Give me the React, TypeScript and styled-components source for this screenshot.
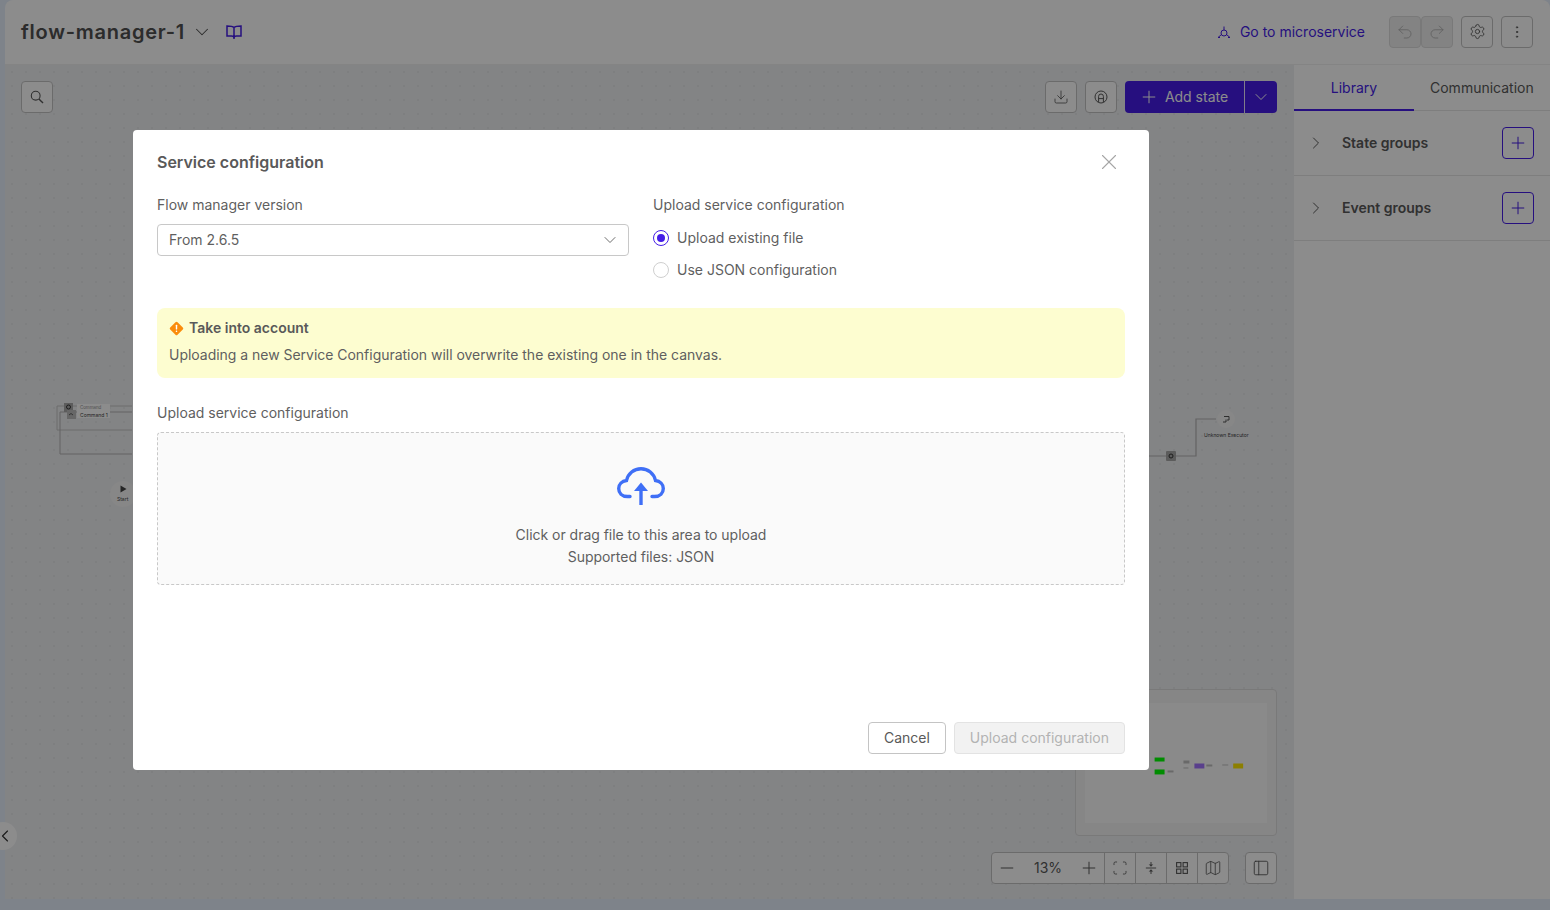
import styled, { createGlobalStyle } from 'styled-components';
import {
  ChevronDown,
  ChevronLeft,
  ChevronRight,
  Download,
  Map as MapIcon,
  Minus,
  MoreVertical,
  PanelLeft,
  Plus,
  Redo2,
  Scan,
  Settings,
  Undo2,
  X,
} from 'lucide-react';

const GlobalStyle = createGlobalStyle`
  html, body {
    margin: 0;
    padding: 0;
    height: 100%;
    overflow: hidden;
  }
  body {
    font-family: Inter, "Liberation Sans", sans-serif;
    font-size: 14px;
    line-height: 22px;
    color: #5f5f5f;
  }
  * {
    box-sizing: border-box;
  }
`;

const Shell = styled.div`
  position: relative;
  height: 910px;
  padding: 0 0 11px 5px;
  background: #e6eefb;
`;

const Main = styled.div`
  height: 100%;
  display: flex;
  flex-direction: column;
  border-radius: 8px 8px 0 0;
  overflow: hidden;
  background: #fff;
`;

const Header = styled.header`
  height: 65px;
  flex: none;
  display: flex;
  align-items: center;
  padding: 0 17px 1px 16px;
  border-bottom: 1px solid #f0f0f0;
`;

const FlowName = styled.h1`
  margin: 0 6px 0 0;
  font-size: 20px;
  line-height: 28px;
  font-weight: 600;
  letter-spacing: 0.75px;
  color: #505050;
`;

const HeaderLeft = styled.div`
  display: flex;
  align-items: center;
  color: #505050;
`;

const BookButton = styled.span`
  display: flex;
  margin-left: 13px;
  color: #451de7;
`;

const HeaderRight = styled.div`
  margin-left: auto;
  display: flex;
  align-items: center;
`;

const MicroLink = styled.a`
  display: flex;
  align-items: center;
  gap: 9px;
  margin-right: 24px;
  color: #451de7;
`;

const IconButton = styled.button<{ $disabled?: boolean; $gap?: number }>`
  width: 32px;
  height: 32px;
  flex: none;
  display: flex;
  align-items: center;
  justify-content: center;
  padding: 0;
  margin-left: ${(p) => p.$gap ?? 0}px;
  border: 1px solid ${(p) => (p.$disabled ? '#dcdcdc' : '#c4c4c4')};
  border-radius: 4px;
  background: ${(p) => (p.$disabled ? '#efefef' : '#fff')};
  color: ${(p) => (p.$disabled ? '#adadad' : '#595959')};
`;

const Body = styled.div`
  flex: 1;
  min-height: 0;
  display: flex;
`;

const Canvas = styled.main`
  position: relative;
  flex: 1;
  min-width: 0;
  display: flex;
  flex-direction: column;
  padding: 16px 17px 15px 16px;
  background-color: #eff0f3;
  background-image: radial-gradient(#e6e7ea 1px, transparent 1px);
  background-size: 14px 14px;
`;

const CanvasTop = styled.div`
  position: relative;
  display: flex;
  align-items: center;
`;

const CanvasActions = styled.div`
  margin-left: auto;
  display: flex;
  align-items: center;
  gap: 8px;
`;

const SplitButton = styled.div`
  display: flex;
  height: 32px;
  border-radius: 4px;
  overflow: hidden;
  background: #451de7;
  color: #fff;
`;

const AddState = styled.div`
  width: 119px;
  display: flex;
  align-items: center;
  justify-content: center;
  gap: 6px;
  padding-right: 2px;
`;

const SplitCaret = styled.div`
  width: 33px;
  display: flex;
  align-items: center;
  justify-content: center;
  border-left: 1px solid #e9e4fb;
`;

const Diagram = styled.svg`
  position: absolute;
  left: 0;
  top: 0;
  width: 1289px;
  height: 834px;
`;

const NodeText = styled.span<{ $x: number; $y: number; $size?: number; $soft?: boolean }>`
  position: absolute;
  left: ${(p) => p.$x}px;
  top: ${(p) => p.$y}px;
  font-size: ${(p) => p.$size ?? 5}px;
  line-height: 6px;
  white-space: nowrap;
  color: ${(p) => (p.$soft ? '#8f8f8f' : '#444')};
`;

const NodeLabelBox = styled.div`
  position: absolute;
  left: 72px;
  top: 339px;
  width: 33px;
  height: 14px;
  background: #fff;
`;

const Minimap = styled.div`
  margin-top: auto;
  align-self: flex-end;
  width: 202px;
  height: 147px;
  padding: 13px 9px 12px;
  border: 1px solid #dcdcdc;
  border-radius: 4px;
  background: #f5f5f5;
`;

const MinimapInner = styled.svg`
  display: block;
  width: 100%;
  height: 100%;
  background: #fbfbfb;
`;

const CanvasBottom = styled.div`
  margin-top: 16px;
  display: flex;
  justify-content: flex-end;
  gap: 16px;
`;

const ZoomBar = styled.div`
  display: flex;
  height: 32px;
  border: 1px solid #c4c4c4;
  border-radius: 4px;
  background: #fff;
  color: #595959;
`;

const ZoomStepper = styled.div`
  width: 112px;
  display: flex;
  align-items: center;
  justify-content: space-between;
  padding: 0 5px;
`;

const ZoomCell = styled.div`
  width: 31px;
  display: flex;
  align-items: center;
  justify-content: center;
  border-left: 1px solid #c4c4c4;
`;

const Sidebar = styled.aside`
  width: 256px;
  flex: none;
  background: #fff;
`;

const Tabs = styled.div`
  display: flex;
  height: 46px;
  border-bottom: 1px solid #e6e6e6;
`;

const Tab = styled.div<{ $active?: boolean }>`
  display: flex;
  align-items: center;
  justify-content: center;
  height: 46px;
  padding-top: 2px;
  width: ${(p) => (p.$active ? '120px' : 'auto')};
  padding-left: ${(p) => (p.$active ? 0 : '16px')};
  color: ${(p) => (p.$active ? '#451de7' : '#595959')};
  border-bottom: 2px solid ${(p) => (p.$active ? '#451de7' : 'transparent')};
  white-space: nowrap;
`;

const GroupRow = styled.div`
  height: 65px;
  display: flex;
  align-items: center;
  padding: 0 16px 0 12px;
  border-bottom: 1px solid #e6e6e6;
  color: #595959;
`;

const GroupName = styled.span`
  margin-left: 16px;
  font-weight: 600;
`;

const AddGroup = styled.button`
  width: 32px;
  height: 32px;
  margin-left: auto;
  display: flex;
  align-items: center;
  justify-content: center;
  padding: 0;
  border: 1px solid #451de7;
  border-radius: 4px;
  background: #fff;
  color: #451de7;
`;

const SideToggle = styled.div`
  position: absolute;
  left: -11px;
  top: 822px;
  width: 28px;
  height: 28px;
  display: flex;
  align-items: center;
  justify-content: flex-end;
  padding-right: 2px;
  border-radius: 50%;
  background: #fff;
  color: #333;
`;

const Overlay = styled.div`
  position: fixed;
  inset: 0;
  padding: 130px 0 0 133px;
  background: rgba(0, 0, 0, 0.45);
`;

const Modal = styled.section`
  width: 1016px;
  height: 640px;
  display: flex;
  flex-direction: column;
  padding: 20px 24px 16px;
  border-radius: 4px;
  background: #fff;
`;

const ModalHead = styled.div`
  display: flex;
  align-items: center;
  justify-content: space-between;
  height: 24px;
  margin-bottom: 20px;
`;

const ModalTitle = styled.h2`
  margin: 0;
  font-size: 16px;
  line-height: 24px;
  font-weight: 600;
  color: #595959;
`;

const CloseIcon = styled.span`
  display: flex;
  margin-right: 3px;
  color: #a6a6a6;
`;

const Columns = styled.div`
  display: grid;
  grid-template-columns: 1fr 1fr;
  gap: 24px;
`;

const Field = styled.div`
  display: flex;
  flex-direction: column;
  align-items: flex-start;
`;

const Label = styled.label`
  display: block;
  margin-bottom: 8px;
`;

const SelectBox = styled.div`
  width: 100%;
  height: 32px;
  display: flex;
  align-items: center;
  justify-content: space-between;
  padding: 0 8px 0 11px;
  border: 1px solid #c8c8c8;
  border-radius: 4px;
`;

const RadioGroup = styled.div`
  display: flex;
  flex-direction: column;
  gap: 10px;
  margin-top: 3px;
`;

const RadioRow = styled.div`
  display: flex;
  align-items: center;
  gap: 8px;
`;

const RadioMark = styled.span<{ $checked?: boolean }>`
  width: 16px;
  height: 16px;
  display: flex;
  align-items: center;
  justify-content: center;
  border-radius: 50%;
  border: 1px solid ${(p) => (p.$checked ? '#451de7' : '#cfcfcf')};

  &::after {
    content: '';
    display: ${(p) => (p.$checked ? 'block' : 'none')};
    width: 8px;
    height: 8px;
    border-radius: 50%;
    background: #451de7;
  }
`;

const Notice = styled.div`
  display: flex;
  flex-direction: column;
  gap: 5px;
  margin-top: 27px;
  padding: 9px 12px 12px;
  border-radius: 8px;
  background: #fdfdd0;
`;

const NoticeTitle = styled.div`
  display: flex;
  align-items: center;
  gap: 5px;
  font-weight: 600;
  color: #595959;
`;

const NoticeText = styled.div`
  letter-spacing: -0.025px;
`;

const UploadSection = styled.div`
  margin-top: 24px;
`;

const DropZone = styled.div`
  height: 153px;
  display: flex;
  flex-direction: column;
  align-items: center;
  padding-top: 34px;
  border: 1px dashed #c8c8c8;
  border-radius: 4px;
  background: #fafafa;
  text-align: center;
`;

const DropText = styled.div`
  margin-top: 19px;
  letter-spacing: -0.025px;
`;

const Footer = styled.div`
  margin-top: auto;
  display: flex;
  justify-content: flex-end;
  gap: 8px;
`;

const FooterButton = styled.button<{ $disabled?: boolean }>`
  height: 32px;
  padding: 0 15px;
  font: inherit;
  border: 1px solid ${(p) => (p.$disabled ? '#e3e3e3' : '#c4c4c4')};
  border-radius: 4px;
  background: ${(p) => (p.$disabled ? '#f2f2f2' : '#fff')};
  color: ${(p) => (p.$disabled ? '#b3b3b3' : '#595959')};
`;

const stroke = 1.25;

function BookIcon() {
  return (
    <svg width="16" height="16" viewBox="0 0 16 16" fill="none" stroke="currentColor" strokeWidth="1.5">
      <path d="M8 3.500C7 2.500 5.500 2 1 2V12H5.500C6.800 12 8 12.500 8 14C8 12.500 9.200 12 10.500 12H15V2C10.500 2 9 2.500 8 3.500ZM8 3.500V15" />
    </svg>
  );
}

function SearchIcon() {
  return (
    <svg width="14" height="14" viewBox="0 0 14 14" fill="none" stroke="currentColor" strokeWidth="1.100">
      <circle cx="5.700" cy="5.700" r="4.400" />
      <path d="M8.900 8.900L13 13" strokeWidth="1.400" />
    </svg>
  );
}

function GridIcon() {
  return (
    <svg width="12" height="12" viewBox="0 0 12 12" fill="none" stroke="currentColor" strokeWidth="1.100">
      <rect x="0.600" y="0.600" width="4.300" height="4.300" />
      <rect x="7.100" y="0.600" width="4.300" height="4.300" />
      <rect x="0.600" y="7.100" width="4.300" height="4.300" />
      <rect x="7.100" y="7.100" width="4.300" height="4.300" />
    </svg>
  );
}

function MicroserviceIcon() {
  return (
    <svg width="14" height="14" viewBox="0 0 14 14" fill="none" stroke="currentColor" strokeWidth="1">
      <circle cx="7" cy="8" r="3" />
      <path d="M7 5V1.500M4.500 9.500L1 12.500M9.500 9.500L13 12.500M1 12.500h2M11 12.500h2" />
    </svg>
  );
}

function AutoLayoutIcon() {
  return (
    <svg width="14" height="14" viewBox="0 0 14 14" fill="none" stroke="currentColor" strokeWidth="1">
      <circle cx="7" cy="7" r="6" />
      <path d="M4.600 12V6.400a2.400 2.400 0 0 1 4.800 0V12M4.600 8.600h4.800" />
    </svg>
  );
}

function SplitIcon() {
  return (
    <svg width="12" height="14" viewBox="0 0 14 16" fill="none" stroke="currentColor" strokeWidth="1.100">
      <path d="M1 8h12M7 1v4.500M7 10.500V15" />
      <path d="M5.200 4L7 6l1.800-2M5.200 12L7 10l1.800 2" fill="currentColor" />
    </svg>
  );
}

function CloudUploadIcon() {
  return (
    <svg width="48" height="38" viewBox="0 0 48 38" fill="none">
      <path
        d="M13 29.500H10.500C5 29.500 1.700 26 1.700 21.500C1.700 17.200 5 14 9.500 13.500C11 6.500 17 1.700 24 1.700C31 1.700 37 6.500 38.500 13.500C43 14 46.300 17.200 46.300 21.500C46.300 26 43 29.500 37.500 29.500H35"
        stroke="#3f6ff6"
        strokeWidth="3.400"
        strokeLinecap="round"
      />
      <path d="M24 21V38" stroke="#3f6ff6" strokeWidth="3.400" />
      <path d="M17 24L24 15.500L31 24Z" fill="#3f6ff6" />
    </svg>
  );
}

function WarningIcon() {
  return (
    <svg width="15" height="15" viewBox="0 0 15 15">
      <rect x="2.300" y="2.300" width="10.400" height="10.400" rx="1.500" transform="rotate(45 7.500 7.500)" fill="#fa8c0c" />
      <rect x="6.800" y="3.800" width="1.400" height="4.800" rx="0.500" fill="#fff" />
      <rect x="6.800" y="9.600" width="1.400" height="1.400" rx="0.500" fill="#fff" />
    </svg>
  );
}

// drawn in canvas coordinates: the canvas starts at x 5, y 65 of the page
function DiagramLines() {
  return (
    <Diagram viewBox="0 0 1289 834" fill="none">
      <path d="M127 341H52V365H127" stroke="#c4c4c4" />
      <path d="M127 347H55V389H127" stroke="#b4b4b4" />
      <rect x="59" y="338" width="9" height="9" fill="#a8a8a8" />
      <circle cx="63.500" cy="342" r="2" stroke="#333" />
      <rect x="62" y="345" width="9" height="9" fill="#bcbcbc" />
      <path d="M64 350l2-1.500 2 1.500" stroke="#333" strokeWidth="0.700" />
      <circle cx="118" cy="429" r="13" fill="#f6f6f6" />
      <path d="M115.500 420.500L121.500 424L115.500 427.500Z" fill="#444" />
      <path d="M1144 391H1191V354H1211" stroke="#b4b4b4" strokeWidth="1.200" />
      <rect x="1161" y="386" width="10" height="10" rx="1" fill="#a8a8a8" />
      <circle cx="1166" cy="391" r="2" stroke="#333" />
      <circle cx="1221" cy="354" r="9" fill="#f6f6f6" />
      <path d="M1219 351.500h5v3.500h-2M1218 357h3v-2.500" stroke="#444" strokeWidth="0.900" />
    </Diagram>
  );
}

function MinimapShapes() {
  return (
    <MinimapInner viewBox="0 0 183 119">
      <rect x="70" y="54" width="10" height="4" fill="#00ff00" />
      <rect x="70" y="66" width="10" height="5" fill="#00ff00" />
      <rect x="83" y="67" width="6" height="2" fill="#c0c0c0" />
      <rect x="99" y="57" width="6" height="3" fill="#c0c0c0" />
      <rect x="99" y="64" width="5" height="1" fill="#c0c0c0" />
      <rect x="110" y="60" width="10" height="5" fill="#a373ff" />
      <rect x="122" y="61" width="6" height="2" fill="#c0c0c0" />
      <rect x="138" y="61" width="6" height="1" fill="#c0c0c0" />
      <rect x="149" y="60" width="10" height="5" fill="#ffe800" />
    </MinimapInner>
  );
}

export default function App() {
  return (
    <>
      <GlobalStyle />
      <Shell>
        <Main>
          <Header>
            <HeaderLeft>
              <FlowName>flow-manager-1</FlowName>
              <ChevronDown size={22} strokeWidth={1.1} />
              <BookButton>
                <BookIcon />
              </BookButton>
            </HeaderLeft>
            <HeaderRight>
              <MicroLink>
                <MicroserviceIcon />
                Go to microservice
              </MicroLink>
              <IconButton $disabled>
                <Undo2 size={18} strokeWidth={1.1} />
              </IconButton>
              <IconButton $disabled>
                <Redo2 size={18} strokeWidth={1.1} />
              </IconButton>
              <IconButton $gap={8}>
                <Settings size={17} strokeWidth={stroke} />
              </IconButton>
              <IconButton $gap={8}>
                <MoreVertical size={16} strokeWidth={1.5} />
              </IconButton>
            </HeaderRight>
          </Header>
          <Body>
            <Canvas>
              <DiagramLines />
              <NodeLabelBox />
              <NodeText $x={75} $y={340} $size={4.4} $soft>Command</NodeText>
              <NodeText $x={75} $y={347}>Command 1</NodeText>
              <NodeText $x={112} $y={431}>Start</NodeText>
              <NodeText $x={1199} $y={367}>Unknown Executor</NodeText>
              <CanvasTop>
                <IconButton>
                  <SearchIcon />
                </IconButton>
                <CanvasActions>
                  <IconButton>
                    <Download size={16} strokeWidth={stroke} />
                  </IconButton>
                  <IconButton>
                    <AutoLayoutIcon />
                  </IconButton>
                  <SplitButton>
                    <AddState>
                      <Plus size={20} strokeWidth={1.2} />
                      Add state
                    </AddState>
                    <SplitCaret>
                      <ChevronDown size={20} strokeWidth={1.2} />
                    </SplitCaret>
                  </SplitButton>
                </CanvasActions>
              </CanvasTop>
              <Minimap>
                <MinimapShapes />
              </Minimap>
              <CanvasBottom>
                <ZoomBar>
                  <ZoomStepper>
                    <Minus size={20} strokeWidth={1.2} />
                    13%
                    <Plus size={20} strokeWidth={1.2} />
                  </ZoomStepper>
                  <ZoomCell>
                    <Scan size={16} strokeWidth={stroke} />
                  </ZoomCell>
                  <ZoomCell>
                    <SplitIcon />
                  </ZoomCell>
                  <ZoomCell>
                    <GridIcon />
                  </ZoomCell>
                  <ZoomCell>
                    <MapIcon size={18} strokeWidth={1.1} />
                  </ZoomCell>
                </ZoomBar>
                <IconButton>
                  <PanelLeft size={18} strokeWidth={1.2} />
                </IconButton>
              </CanvasBottom>
            </Canvas>
            <Sidebar>
              <Tabs>
                <Tab $active>Library</Tab>
                <Tab>Communication</Tab>
              </Tabs>
              <GroupRow>
                <ChevronRight size={20} strokeWidth={1.2} />
                <GroupName>State groups</GroupName>
                <AddGroup>
                  <Plus size={20} strokeWidth={1.2} />
                </AddGroup>
              </GroupRow>
              <GroupRow>
                <ChevronRight size={20} strokeWidth={1.2} />
                <GroupName>Event groups</GroupName>
                <AddGroup>
                  <Plus size={20} strokeWidth={1.2} />
                </AddGroup>
              </GroupRow>
            </Sidebar>
          </Body>
        </Main>
        <SideToggle>
          <ChevronLeft size={20} strokeWidth={1.4} />
        </SideToggle>
      </Shell>
      <Overlay>
        <Modal>
          <ModalHead>
            <ModalTitle>Service configuration</ModalTitle>
            <CloseIcon>
              <X size={26} strokeWidth={1} />
            </CloseIcon>
          </ModalHead>
          <Columns>
            <Field>
              <Label>Flow manager version</Label>
              <SelectBox>
                From 2.6.5
                <ChevronDown size={20} strokeWidth={1.1} />
              </SelectBox>
            </Field>
            <Field>
              <Label>Upload service configuration</Label>
              <RadioGroup>
                <RadioRow>
                  <RadioMark $checked />
                  Upload existing file
                </RadioRow>
                <RadioRow>
                  <RadioMark />
                  Use JSON configuration
                </RadioRow>
              </RadioGroup>
            </Field>
          </Columns>
          <Notice>
            <NoticeTitle>
              <WarningIcon />
              Take into account
            </NoticeTitle>
            <NoticeText>Uploading a new Service Configuration will overwrite the existing one in the canvas.</NoticeText>
          </Notice>
          <UploadSection>
            <Label>Upload service configuration</Label>
            <DropZone>
              <CloudUploadIcon />
              <DropText>
                Click or drag file to this area to upload
                <br />
                Supported files: JSON
              </DropText>
            </DropZone>
          </UploadSection>
          <Footer>
            <FooterButton>Cancel</FooterButton>
            <FooterButton $disabled>Upload configuration</FooterButton>
          </Footer>
        </Modal>
      </Overlay>
    </>
  );
}
